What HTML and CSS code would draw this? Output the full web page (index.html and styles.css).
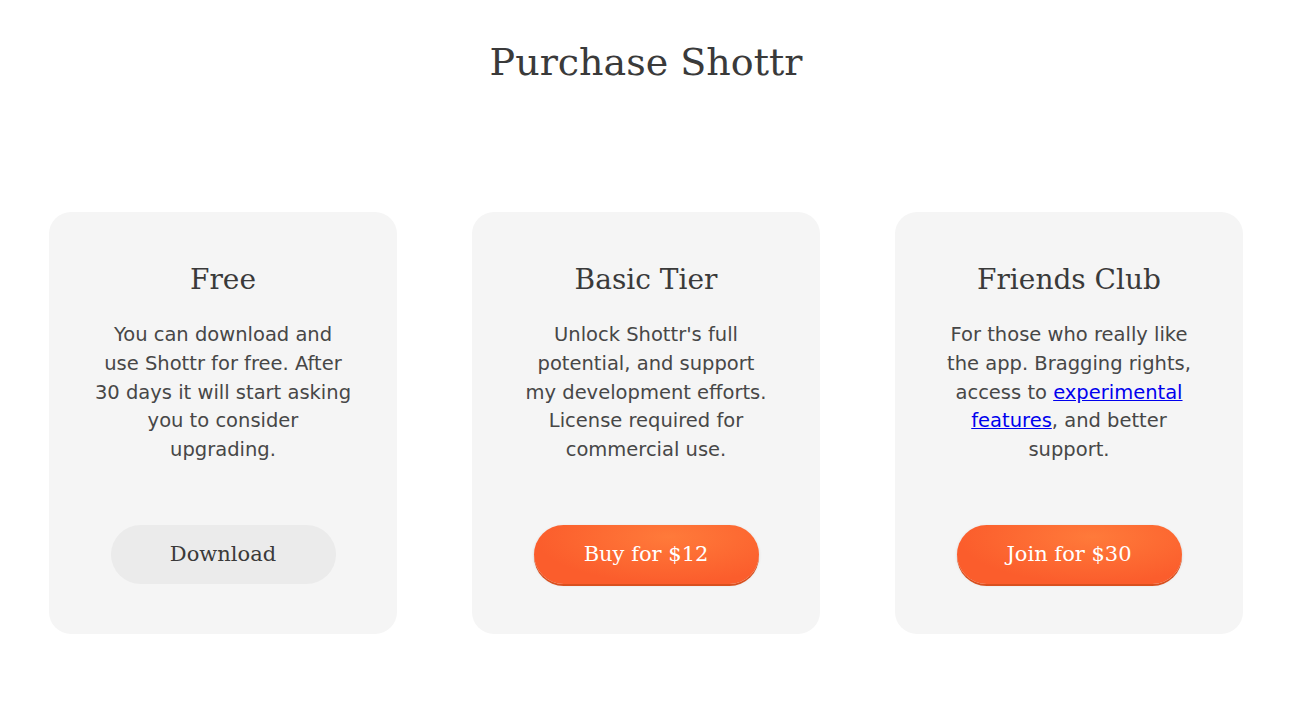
FILE: index.html
```html
<!DOCTYPE html>
<html lang="en">
  <head>
    <meta charset="UTF-8" />
    <meta name="viewport" content="width=device-width, initial-scale=1.0" />
    <title>Purchase Shottr</title>
    <link rel="stylesheet" href="styles.css">
  </head>
  <body>
    <main class="page">
      <h1 class="title">Purchase Shottr</h1>

      <div class="tiers">
        <div class="tier">
          <h2 class="tier-name">Free</h2>
          <p class="tier-text">You can download and<br> use Shottr for free. After<br> 30 days it will start asking<br> you to consider<br> upgrading.</p>
          <a class="btn btn-plain" href="#">Download</a>
        </div>
        <div class="tier">
          <h2 class="tier-name">Basic Tier</h2>
          <p class="tier-text">Unlock Shottr's full<br> potential, and support<br> my development efforts.<br> License required for<br> commercial use.</p>
          <a class="btn btn-buy" href="#">Buy for $12</a>
        </div>
        <div class="tier">
          <h2 class="tier-name">Friends Club</h2>
          <p class="tier-text">For those who really like<br> the app. Bragging rights,<br> access to <a href="#">experimental<br> features</a>, and better<br> support.</p>
          <a class="btn btn-buy" href="#">Join for $30</a>
        </div>
      </div>
    </main>
  </body>
</html>
```

FILE: styles.css
```css
body {
  margin: 0;
  background: #fff;
  color: #3a3a3a;
  font-family: "DejaVu Sans", sans-serif;
}
.page {
  width: 1194px;
  margin-left: 49px;
  padding-top: 35px;
}
.title {
  margin: 0;
  text-align: center;
  font-family: "DejaVu Serif", serif;
  font-weight: normal;
  font-size: 38px;
  line-height: 54px;
  color: #3a3a3a;
}
.tiers {
  display: flex;
  gap: 75px;
  margin-top: 123px;
}
.tier {
  flex: 1;
  display: flex;
  flex-direction: column;
  align-items: center;
  background: #f5f5f5;
  border-radius: 22px;
  padding: 48px 0 50px;
}
.tier-name {
  margin: 0;
  font-family: "DejaVu Serif", serif;
  font-weight: normal;
  font-size: 28px;
  line-height: 40px;
  color: #3a3a3a;
}
.tier-text {
  width: 280px;
  margin: 21px 0 0;
  height: 145px;
  text-align: center;
  font-size: 19.5px;
  line-height: 28.75px;
  color: #474747;
}
.tier-text a {
  color: #0000ee;
}
.btn {
  display: block;
  width: 225px;
  height: 59px;
  margin-top: 59px;
  border-radius: 30px;
  text-align: center;
  line-height: 59px;
  text-decoration: none;
  font-family: "DejaVu Serif", serif;
  font-size: 21px;
}
.btn-plain {
  background: #ebebeb;
  color: #3a3a3a;
}
.btn-buy {
  background: radial-gradient(ellipse at 60% 20%, #ff7a3a, #fb5d2c 70%);
  color: #fff;
  box-shadow: 0 2px 0 #d9501f, 0 1px 3px rgba(0, 0, 0, 0.15);
}
```
